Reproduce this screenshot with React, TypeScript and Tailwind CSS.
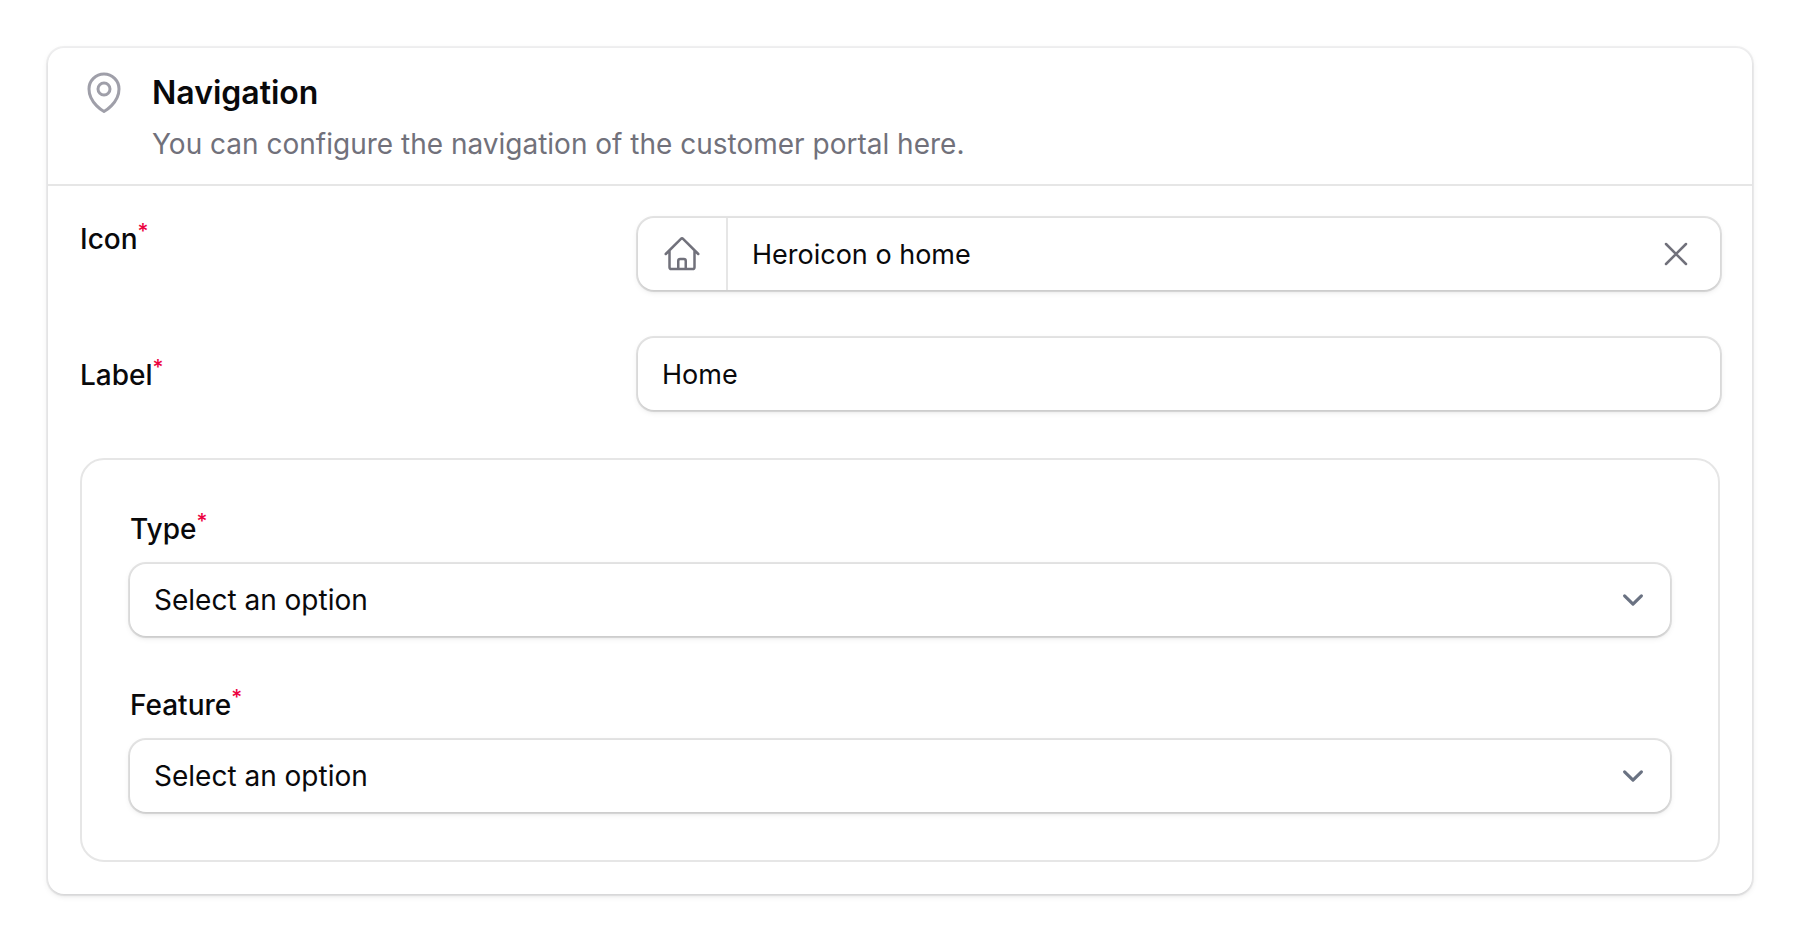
import { ReactNode, useState } from "react";

const typeOptions = ["Link", "Feature", "Page"];
const featureOptions = ["Dashboard", "Invoices", "Tickets"];

const controlShell =
  "rounded-2xl bg-white shadow-[0_2px_6px_rgba(0,0,0,0.1),0_2px_4px_-2px_rgba(0,0,0,0.1)] ring-2 ring-zinc-950/10 focus-within:ring-zinc-400";

const controlText = "h-[72px] w-full min-w-0 bg-transparent px-6 text-zinc-950 outline-none";

function FieldLabel({ htmlFor, children }: { htmlFor: string; children: ReactNode }) {
  return (
    <label htmlFor={htmlFor} className="block h-10 text-[28px] leading-[42px] font-medium text-zinc-950">
      {children}
      <sup className="text-rose-600">*</sup>
    </label>
  );
}

function SelectField({ id, label, options }: { id: string; label: string; options: string[] }) {
  return (
    <div className="grid gap-4">
      <FieldLabel htmlFor={id}>{label}</FieldLabel>
      <div className={`relative ${controlShell}`}>
        <select id={id} required defaultValue="" className={`block appearance-none pr-16 text-[28px] ${controlText}`}>
          <option value="">Select an option</option>
          {options.map((option) => (
            <option key={option}>{option}</option>
          ))}
        </select>
        <svg
          viewBox="0 0 20 20"
          fill="none"
          stroke="currentColor"
          strokeWidth={1.5}
          strokeLinecap="round"
          strokeLinejoin="round"
          className="pointer-events-none absolute inset-y-0 right-4 my-auto size-[42px] text-gray-500"
          aria-hidden="true"
        >
          <path d="M6 8l4 4 4-4" />
        </svg>
      </div>
    </div>
  );
}

function OutlineIcon({ className, children }: { className: string; children: ReactNode }) {
  return (
    <svg
      viewBox="0 0 24 24"
      fill="none"
      stroke="currentColor"
      strokeWidth={1.5}
      strokeLinecap="round"
      strokeLinejoin="round"
      className={`shrink-0 ${className}`}
      aria-hidden="true"
    >
      {children}
    </svg>
  );
}

export default function App() {
  const [icon, setIcon] = useState("Heroicon o home");

  return (
    <main className="min-h-screen bg-white p-12 font-['Inter',sans-serif] text-zinc-950">
      <section className="rounded-2xl bg-white shadow-[0_2px_6px_rgba(0,0,0,0.1),0_2px_4px_-2px_rgba(0,0,0,0.1)] ring-2 ring-zinc-950/5">
        <header className="flex items-start gap-6 px-8 py-5">
          <OutlineIcon className="size-12 text-zinc-400">
            <path d="M15 10.5a3 3 0 1 1-6 0 3 3 0 0 1 6 0Z" />
            <path d="M19.5 10.5c0 7.142-7.5 11.25-7.5 11.25S4.5 17.642 4.5 10.5a7.5 7.5 0 1 1 15 0Z" />
          </OutlineIcon>
          <div className="grid flex-1 gap-1">
            <h2 className="text-[32px] leading-[50px] font-semibold">Navigation</h2>
            <p className="h-[42px] text-[28px] leading-[44px] text-zinc-500">
              You can configure the navigation of the customer portal here.
            </p>
          </div>
        </header>

        <form className="grid gap-12 border-t-2 border-zinc-950/10 p-8" onSubmit={(event) => event.preventDefault()}>
          <div className="grid grid-cols-3 items-start gap-x-[34px]">
            <FieldLabel htmlFor="icon">Icon</FieldLabel>
            <div className={`col-span-2 flex items-center ${controlShell}`}>
              <div className="flex items-center self-stretch border-r-2 border-zinc-950/10 px-6 text-zinc-500">
                <OutlineIcon className="size-10">
                  <path d="m2.25 12 8.954-8.955c.44-.439 1.152-.439 1.591 0L21.75 12M4.5 9.75v10.125c0 .621.504 1.125 1.125 1.125H9.75v-4.875c0-.621.504-1.125 1.125-1.125h2.25c.621 0 1.125.504 1.125 1.125V21h4.125c.621 0 1.125-.504 1.125-1.125V9.75M8.25 21h8.25" />
                </OutlineIcon>
              </div>
              <input
                id="icon"
                type="text"
                required
                value={icon}
                onChange={(event) => setIcon(event.target.value)}
                className={`text-[27px] ${controlText}`}
              />
              <button type="button" aria-label="Clear" onClick={() => setIcon("")} className="mr-6 text-zinc-500">
                <OutlineIcon className="size-10">
                  <path d="M6 18 18 6M6 6l12 12" />
                </OutlineIcon>
              </button>
            </div>
          </div>

          <div className="grid grid-cols-3 items-center gap-x-[34px]">
            <FieldLabel htmlFor="label">Label</FieldLabel>
            <div className={`col-span-2 ${controlShell}`}>
              <input id="label" type="text" required defaultValue="Home" className={`block text-[27px] ${controlText}`} />
            </div>
          </div>

          <div className="grid gap-12 rounded-3xl border-2 border-zinc-950/10 p-12">
            <SelectField id="type" label="Type" options={typeOptions} />
            <SelectField id="feature" label="Feature" options={featureOptions} />
          </div>
        </form>
      </section>
    </main>
  );
}
